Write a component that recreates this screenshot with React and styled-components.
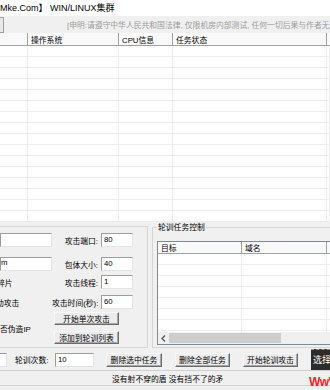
import React from "react";
import styled, { createGlobalStyle } from "styled-components";

const GlobalStyle = createGlobalStyle`
  html, body {
    margin: 0;
    padding: 0;
    background: #f0f0f0;
  }
  body {
    font-family: "Liberation Sans", "Noto Sans CJK SC", sans-serif;
    font-size: 7.8px;
    color: #000;
  }
`;

const topColumns = ["", "操作系统", "CPU信息", "任务状态", ""];
const rightColumns = ["目标", "域名", ""];

function App() {
  return (
    <>
      <GlobalStyle />
      <Window>
        <TitleBar>Mke.Com】 WIN/LINUX集群</TitleBar>

        <Toolbar>
          <EdgeButton />
          <Notice>
            [申明:请遵守中华人民共和国法律, 仅限机房内部测试, 任何一切后果与作者无关]
          </Notice>
        </Toolbar>

        <TaskList>
          <TopHeader>
            {topColumns.map((c, i) => (
              <HeadCell key={i}>{c}</HeadCell>
            ))}
          </TopHeader>
          {Array.from({ length: 16 }, (item, idx) => (
            <TopRow key={idx}>
              {topColumns.map((c, i) => (
                <Cell key={i} />
              ))}
            </TopRow>
          ))}
        </TaskList>

        <Lower>
          <LeftGroup>
            <FieldRow $mt={0}>
              <Field />
              <Label>攻击端口:</Label>
              <Field>80</Field>
            </FieldRow>
            <FieldRow $mt={10}>
              <Field $shift={-4}>m</Field>
              <Label>包体大小:</Label>
              <Field>40</Field>
            </FieldRow>
            <FieldRow $mt={4}>
              <CutText $shift={-3}>碎片</CutText>
              <Label>攻击线程:</Label>
              <Field>1</Field>
            </FieldRow>
            <FieldRow $mt={6}>
              <CutText $shift={-4}>动攻击</CutText>
              <Label>攻击时间(秒):</Label>
              <Field>60</Field>
            </FieldRow>
            <ActionGrid>
              <CheckText>否伪造IP</CheckText>
              <Button>开始单次攻击</Button>
              <Button>添加到轮训列表</Button>
            </ActionGrid>
          </LeftGroup>

          <RightGroup>
            <Legend>轮训任务控制</Legend>
            <InnerList>
              <RightHeader>
                {rightColumns.map((c, i) => (
                  <HeadCell key={i}>{c}</HeadCell>
                ))}
              </RightHeader>
              <RightRows>
                {Array.from({ length: 8 }, (item, idx) => (
                  <RightRow key={idx}>
                    {rightColumns.map((c, i) => (
                      <Cell key={i} />
                    ))}
                  </RightRow>
                ))}
              </RightRows>
              <HScroll>
                <Arrow>
                  <svg width="5" height="7" viewBox="0 0 5 7">
                    <path d="M4 0.5 L1 3.5 L4 6.5" fill="none" stroke="#505050" strokeWidth="1.2" />
                  </svg>
                </Arrow>
                <Thumb />
              </HScroll>
            </InnerList>
          </RightGroup>
        </Lower>

        <BottomBar>
          <StubField />
          <BottomLabel>轮训次数:</BottomLabel>
          <Field $w={39}>10</Field>
          <Button $w={56} $ml={12}>删除选中任务</Button>
          <Button $w={55} $ml={13}>删除全部任务</Button>
          <Button $w={55} $ml={13}>开始轮训攻击</Button>
          <DarkBadge>选择</DarkBadge>
        </BottomBar>

        <StatusBar>
          没有射不穿的盾 没有挡不了的矛
          <RedMark>WwW</RedMark>
        </StatusBar>
      </Window>
    </>
  );
}

const Window = styled.div`
  width: 330px;
  height: 390px;
  overflow: hidden;
  display: flex;
  flex-direction: column;
  background: #f0f0f0;
`;

const TitleBar = styled.div`
  height: 16px;
  flex-shrink: 0;
  display: flex;
  align-items: center;
  padding-bottom: 2px;
  box-sizing: border-box;
  background: #fff;
  font-size: 9px;
  white-space: nowrap;
`;

const Toolbar = styled.div`
  height: 17px;
  flex-shrink: 0;
  display: flex;
  align-items: center;
  background: #f0f0f0;
  overflow: hidden;
`;

const EdgeButton = styled.div`
  width: 3px;
  height: 14px;
  flex-shrink: 0;
  background: #e8e8e8;
  border: 1px solid #a0a0a0;
  border-left: none;
`;

const Notice = styled.div`
  margin-left: 63px;
  color: #9b9b9b;
  white-space: nowrap;
`;

const TaskList = styled.div`
  height: 189px;
  flex-shrink: 0;
  background: #fff;
  overflow: hidden;
`;

const TopHeader = styled.div`
  display: grid;
  grid-template-columns: 28px 91px 54px 154px 1fr;
  height: 13px;
  box-sizing: border-box;
  background: #fafafa;
  border-bottom: 1px solid #a0a0a0;
`;

const HeadCell = styled.div`
  display: flex;
  align-items: center;
  padding-left: 3px;
  border-right: 1px solid #a0a0a0;
  white-space: nowrap;
  overflow: hidden;
`;

const TopRow = styled.div`
  display: grid;
  grid-template-columns: 28px 91px 54px 154px 1fr;
  height: 11px;
  box-sizing: border-box;
  border-bottom: 1px solid #ededed;
`;

const Cell = styled.div`
  border-right: 1px solid #ededed;
`;

const Lower = styled.div`
  height: 127px;
  flex-shrink: 0;
  display: flex;
  align-items: flex-start;
`;

const LeftGroup = styled.div`
  margin-left: -10px;
  margin-top: 4px;
  width: 158px;
  height: 122px;
  flex-shrink: 0;
  box-sizing: border-box;
  border: 1px solid #d5d5d5;
  padding: 6px 0 0 9px;
`;

const FieldRow = styled.div`
  display: grid;
  grid-template-columns: 52px 49px 32px;
  height: 14px;
  align-items: center;
  margin-top: ${(p) => p.$mt}px;
`;

const Field = styled.div`
  width: ${(p) => (p.$w ? `${p.$w}px` : "auto")};
  height: 14px;
  flex-shrink: 0;
  box-sizing: border-box;
  background: #fff;
  border: 1px solid;
  border-color: #9c9c9c #e3e3e3 #e3e3e3 #9c9c9c;
  padding: 1px 0 0 ${(p) => (p.$shift !== undefined ? p.$shift : 2)}px;
  line-height: 10px;
  white-space: nowrap;
  overflow: hidden;
`;

const Label = styled.div`
  text-align: right;
  padding-right: 3px;
  white-space: nowrap;
`;

const CutText = styled.div`
  margin-left: ${(p) => p.$shift}px;
  white-space: nowrap;
`;

const ActionGrid = styled.div`
  display: grid;
  grid-template-columns: 54px 65px;
  grid-template-rows: 13px 13px;
  row-gap: 6px;
  margin-top: 3px;
`;

const CheckText = styled.div`
  grid-row: 1 / 3;
  grid-column: 1;
  align-self: center;
  white-space: nowrap;
`;

const Button = styled.div`
  width: ${(p) => (p.$w ? `${p.$w}px` : "auto")};
  height: ${(p) => (p.$w ? "14px" : "auto")};
  margin-left: ${(p) => p.$ml || 0}px;
  flex-shrink: 0;
  grid-column: 2;
  box-sizing: border-box;
  display: flex;
  align-items: center;
  justify-content: center;
  background: #ececec;
  border: 1px solid;
  border-color: #f8f8f8 #6b6b6b #6b6b6b #f8f8f8;
  box-shadow: inset -1px -1px #a8a8a8;
  white-space: nowrap;
`;

const RightGroup = styled.fieldset`
  margin: 0 0 0 4px;
  padding: 8px 0 0 4px;
  min-width: 0;
  width: 200px;
  height: 126px;
  flex-shrink: 0;
  box-sizing: border-box;
  border: 1px solid #d5d5d5;
  border-right: none;
`;

const Legend = styled.legend`
  padding: 0 1px;
  line-height: 11px;
  white-space: nowrap;
`;

const InnerList = styled.div`
  width: 190px;
  height: 104px;
  box-sizing: border-box;
  border: 1px solid #828790;
  background: #fff;
  display: flex;
  flex-direction: column;
  overflow: hidden;
`;

const RightHeader = styled.div`
  display: grid;
  grid-template-columns: 84px 85px 1fr;
  height: 12px;
  flex-shrink: 0;
  box-sizing: border-box;
  background: #fafafa;
  border-bottom: 1px solid #a0a0a0;
`;

const RightRows = styled.div`
  flex: 1;
  overflow: hidden;
`;

const RightRow = styled.div`
  display: grid;
  grid-template-columns: 84px 85px 1fr;
  height: 11px;
  box-sizing: border-box;
  border-bottom: 1px solid #ededed;
`;

const HScroll = styled.div`
  height: 12px;
  flex-shrink: 0;
  display: flex;
  align-items: center;
  background: #f0f0f0;
`;

const Arrow = styled.div`
  width: 11px;
  height: 12px;
  display: flex;
  align-items: center;
  justify-content: center;
`;

const Thumb = styled.div`
  width: 112px;
  height: 10px;
  background: #cdcdcd;
`;

const BottomBar = styled.div`
  height: 21px;
  flex-shrink: 0;
  display: flex;
  align-items: center;
`;

const StubField = styled.div`
  width: 7px;
  height: 14px;
  flex-shrink: 0;
  box-sizing: border-box;
  background: #fff;
  border: 1px solid;
  border-left: none;
  border-color: #9c9c9c #e3e3e3 #e3e3e3 #9c9c9c;
`;

const BottomLabel = styled.div`
  width: 40px;
  margin-left: 8px;
  flex-shrink: 0;
  white-space: nowrap;
`;

const DarkBadge = styled.div`
  margin-left: 13px;
  width: 24px;
  height: 22px;
  flex-shrink: 0;
  box-sizing: border-box;
  background: #2c2c2c;
  color: #fff;
  font-size: 9px;
  display: flex;
  align-items: center;
  padding-left: 2px;
  border-top: 1px dashed #9a9a9a;
  border-bottom: 1px dashed #9a9a9a;
  white-space: nowrap;
`;

const StatusBar = styled.div`
  position: relative;
  height: 16px;
  flex-shrink: 0;
  box-sizing: border-box;
  display: flex;
  align-items: center;
  padding-left: 112px;
  border-top: 1px solid #d0d0d0;
  border-bottom: 1px solid #d0d0d0;
  white-space: nowrap;
`;

const RedMark = styled.div`
  position: absolute;
  left: 309px;
  top: 5px;
  color: #e8262b;
  font-family: "Liberation Sans", sans-serif;
  font-weight: bold;
  font-size: 12px;
  line-height: 12px;
  letter-spacing: -0.5px;
`;

export default App;
